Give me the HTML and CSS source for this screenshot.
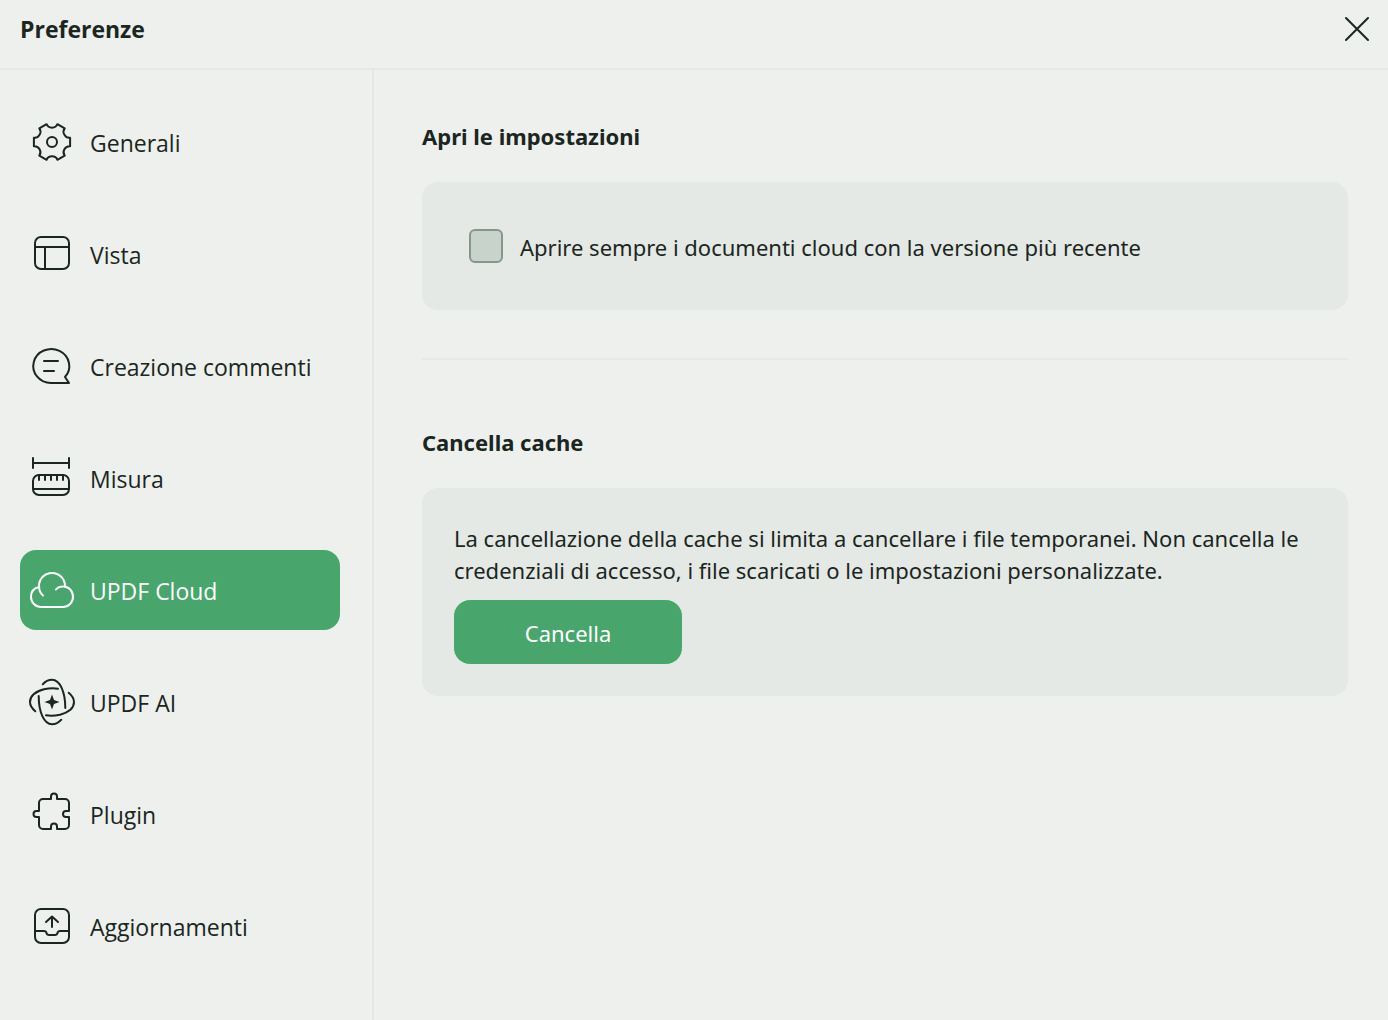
FILE: index.html
```html
<!DOCTYPE html>
<html lang="it">
<head>
<meta charset="utf-8">
<meta name="viewport" content="width=device-width, initial-scale=1">
<title>Preferenze</title>
<link rel="stylesheet" href="styles.css">
</head>
<body>
<header class="titlebar">
  <h1 class="title">Preferenze</h1>
  <button class="close" type="button" aria-label="Chiudi">
    <svg class="close-icon" viewBox="0 0 26 26" aria-hidden="true"><path d="M2 2 24 24M24 2 2 24"/></svg>
  </button>
</header>
<div class="body">
  <nav class="sidebar">
    <a class="item" href="#generali">
      <svg class="icon" viewBox="0 0 48 48" aria-hidden="true"><g transform="translate(24 24)"><path d="M-5.4-17.8Q-4-14.3 0-14.3Q4-14.3 5.4-17.8L12.7-13.6Q10.4-10.6 12.4-7.2Q14.4-3.7 18.1-4.2V4.2Q14.4 3.7 12.4 7.2Q10.4 10.6 12.7 13.6L5.4 17.8Q4 14.3 0 14.3Q-4 14.3-5.4 17.8L-12.7 13.6Q-10.4 10.6-12.4 7.2Q-14.4 3.7-18.1 4.2V-4.2Q-14.4-3.7-12.4-7.2Q-10.4-10.6-12.7-13.6Z"/><circle r="5"/></g></svg>
      <span class="item-label">Generali</span>
    </a>
    <a class="item" href="#vista">
      <svg class="icon" viewBox="0 0 48 48" aria-hidden="true"><rect x="7" y="7" width="34" height="32" rx="6"/><path d="M7 17H41M17 17V39"/></svg>
      <span class="item-label">Vista</span>
    </a>
    <a class="item" href="#commenti">
      <svg class="icon" viewBox="0 0 48 48" aria-hidden="true"><path d="M23 41H41L37 35A18 17 0 1 0 23 41ZM16 19H30M16 29H26"/></svg>
      <span class="item-label">Creazione commenti</span>
    </a>
    <a class="item" href="#misura">
      <svg class="icon" viewBox="0 0 48 48" aria-hidden="true"><path d="M5 4V14M41 4V14M5 9H41M5 35H41M11 21V26M17 21V26M23 21V26M29 21V26M35 21V26"/><rect x="5" y="21" width="36" height="20" rx="6"/></svg>
      <span class="item-label">Misura</span>
    </a>
    <a class="item selected" href="#cloud" aria-current="page">
      <svg class="icon" viewBox="0 0 48 48" aria-hidden="true"><path d="M11.3 21C6 22 3 26 3 31A10 10 0 0 0 13 41H35A10 10 0 0 0 45 31C45 25 41 20.5 35 20.5C32 20.5 29.5 21.5 28 23.5M15 29.5C12 27 11 23 11 20A13 13 0 0 1 37 20"/></svg>
      <span class="item-label">UPDF Cloud</span>
    </a>
    <a class="item" href="#ai">
      <svg class="icon" viewBox="0 0 48 48" aria-hidden="true"><g transform="translate(24 24)"><path d="M-9.3-17.7C-6.5-21-3-22.3 0-22.3C8-22.3 13.3-10 13.3 6M6-13.3C2-14-3-13.8-8-12.7C-16-10.5-22-6-22 0C-22 3.5-20 6.5-16.7 9.3"/><path transform="rotate(180)" d="M-9.3-17.7C-6.5-21-3-22.3 0-22.3C8-22.3 13.3-10 13.3 6M6-13.3C2-14-3-13.8-8-12.7C-16-10.5-22-6-22 0C-22 3.5-20 6.5-16.7 9.3"/><path class="solid" d="M0-7.5L2-2 7.5 0 2 2 0 7.5-2 2-7.5 0-2-2Z"/></g></svg>
      <span class="item-label">UPDF AI</span>
    </a>
    <a class="item" href="#plugin">
      <svg class="icon" viewBox="0 0 48 48" aria-hidden="true"><path d="M15 9H23V6.5a3 3 0 0 1 6 0V9H37a4 4 0 0 1 4 4V21H38a3 3 0 0 0 0 6H41V35a4 4 0 0 1-4 4H29V36.5a3 3 0 0 0-6 0V39H15a4 4 0 0 1-4-4V27H8.5a3 3 0 0 1 0-6H11V13a4 4 0 0 1 4-4Z"/></svg>
      <span class="item-label">Plugin</span>
    </a>
    <a class="item" href="#aggiornamenti">
      <svg class="icon" viewBox="0 0 48 48" aria-hidden="true"><rect x="7" y="7" width="34" height="34" rx="6"/><path d="M7 29H16Q18 29 18.5 31Q19 33 21 33H27Q29 33 29.5 31Q30 29 32 29H41M24 25V15M18 20 24 14.5 30 20"/></svg>
      <span class="item-label">Aggiornamenti</span>
    </a>
  </nav>
  <main class="content">
    <section>
      <h2 class="heading">Apri le impostazioni</h2>
      <div class="card option-card">
        <label class="option"><input class="check" type="checkbox"><span class="option-label">Aprire sempre i documenti cloud con la versione più recente</span></label>
      </div>
    </section>
    <hr class="divider">
    <section>
      <h2 class="heading">Cancella cache</h2>
      <div class="card cache-card">
        <p class="text">La cancellazione della cache si limita a cancellare i file temporanei. Non cancella le credenziali di accesso, i file scaricati o le impostazioni personalizzate.</p>
        <button class="primary" type="button">Cancella</button>
      </div>
    </section>
  </main>
</div>
</body>
</html>
```
FILE: styles.css
```css
* { box-sizing: border-box; }

body {
  margin: 0;
  min-height: 100vh;
  display: flex;
  flex-direction: column;
  background: #edf0ed;
  color: #1b2621;
  font: 23px/32px "Open Sans", "Noto Sans", sans-serif;
}

.titlebar {
  display: flex;
  align-items: center;
  justify-content: space-between;
  height: 70px;
  padding: 0 16px 10px 20px;
  border-bottom: 2px solid #e5e9e6;
}

.title {
  margin: 0;
  font-size: 23px;
  line-height: 32px;
  font-weight: 700;
}

.close {
  display: flex;
  padding: 2px;
  border: 0;
  background: none;
  color: inherit;
}

.close-icon {
  width: 26px;
  height: 26px;
  fill: none;
  stroke: currentColor;
  stroke-width: 2;
  stroke-linecap: round;
}

.body {
  display: flex;
  flex: 1;
}

.sidebar {
  display: flex;
  flex: 0 0 374px;
  flex-direction: column;
  gap: 32px;
  padding: 32px 32px 32px 20px;
  border-right: 2px solid #e5e9e6;
}

.item {
  display: flex;
  align-items: center;
  gap: 14px;
  height: 80px;
  padding: 0 8px;
  border-radius: 16px;
  color: inherit;
  text-decoration: none;
  white-space: nowrap;
}

.item-label,
.option-label {
  padding-top: 2px;
}

.selected {
  background: #48a66c;
  color: #fff;
}

.icon {
  flex: none;
  width: 48px;
  height: 48px;
  fill: none;
  stroke: currentColor;
  stroke-width: 2;
  stroke-linecap: round;
  stroke-linejoin: round;
}

.solid {
  fill: currentColor;
  stroke: none;
}

.content {
  flex: 1;
  min-width: 0;
  padding: 50px 40px 40px 48px;
  font-family: "Noto Sans", "Open Sans", sans-serif;
  font-size: 22px;
}

.heading {
  margin: 0;
  font-size: 22px;
  line-height: 32px;
  font-weight: 700;
}

.card {
  margin-top: 30px;
  border-radius: 16px;
  background: #e5e9e6;
}

.option-card {
  padding: 47px;
}

.option {
  display: flex;
  align-items: center;
  gap: 17px;
}

.check {
  appearance: none;
  flex: none;
  width: 34px;
  height: 34px;
  margin: 0;
  border: 2px solid #87968c;
  border-radius: 6px;
  background: #c8d4cb;
}

.check:checked {
  background: #48a66c;
}

.divider {
  height: 2px;
  margin: 48px 0 66px;
  border: 0;
  background: #e5e9e6;
}

.cache-card {
  padding: 34px 32px 32px;
}

.text {
  margin: 0 0 14px;
}

.primary {
  width: 228px;
  height: 64px;
  padding: 2px 0 0;
  border: 0;
  border-radius: 16px;
  background: #48a66c;
  color: #fff;
  font: inherit;
}
```
